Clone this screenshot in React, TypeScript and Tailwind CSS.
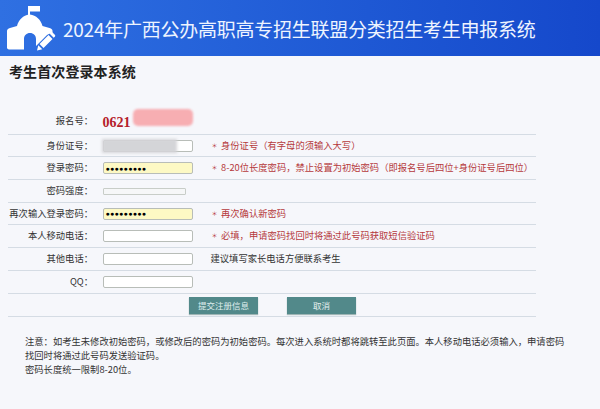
const font = "[font-family:'Noto_Sans_CJK_SC','Liberation_Sans',sans-serif]";

function Logo() {
  return (
    <svg width="56" height="56" viewBox="0 0 56 56" className="shrink-0">
      <path fill="#fff" d="M28 6h12v5.500H30V15h-2z" />
      <path
        fill="#fff"
        d="M29 14.500C23.500 15 18.500 20 17 26L10 28C8 28.500 7 29.500 7 31V47.500C7 48.800 8 49.500 9 49.500H24V39C24 35.500 26.500 33 30 33C33.500 33 36 35.500 36 39V46L46.500 35.500C48 34 50 33.500 52.500 34V31C52.500 29.500 51.500 28.500 49.500 28L42.500 26C41 20 36 15 30 14.500z"
      />
      <path fill="#fff" d="M39.500 44L48.500 35L52.500 39L43.500 48zM38.300 45.300L42.300 49.300L37 50.500zM49.700 33.800L50.800 32.700C51.400 32.100 52.200 32.100 52.800 32.700L54.800 34.700C55.400 35.300 55.400 36.100 54.800 36.700L53.700 37.800z" />
    </svg>
  );
}

function Row({ label, children, hint, star, h }: { label: string; children?: React.ReactNode; hint?: string; star?: boolean; h: string }) {
  return (
    <div className={`flex items-center ${h} border-b border-[#d5dce4]`}>
      <div className="w-[85px] shrink-0 text-right text-[9.300px] text-[#333] whitespace-nowrap">{label}</div>
      <div className="w-[107.500px] shrink-0 pl-[9.500px] flex items-center">{children}</div>
      {hint && (
        <div className={`pl-[10px] shrink-0 flex items-center text-[9.300px] whitespace-nowrap ${star ? "text-[#b5393c]" : "text-[#333]"}`}>
          {star && <span className="w-[10.500px] pl-[1px] text-[6px] leading-none">＊</span>}
          <span>{hint}</span>
        </div>
      )}
    </div>
  );
}

function Field({ yellow, value }: { yellow?: boolean; value?: string }) {
  return (
    <div className={`w-[90px] h-[12px] rounded-[2px] border border-[#b8bdb8] flex items-center pl-[2px] ${yellow ? "bg-[#fdf9c4]" : "bg-white"}`}>
      {value && <span className="text-[7px] leading-none tracking-[0.300px] text-black font-bold font-['Liberation_Sans',sans-serif]">{value}</span>}
    </div>
  );
}

export default function App() {
  return (
    <div className={`w-[600px] h-[409px] overflow-hidden bg-[#f6f7fb] ${font}`}>
      <header className="h-[56px] flex items-center gap-[7px] bg-gradient-to-r from-[#2f70e2] to-[#1548cb] text-[#eef4ff]">
        <Logo />
        <h1 className="text-[19px] leading-none whitespace-nowrap tracking-[-0.250px]">2024年广西公办高职高专招生联盟分类招生考生申报系统</h1>
      </header>
      <div className="pl-[8px] w-[536px]">
        <h2 className="pt-[7px] pl-[1px] text-[14px] leading-[17px] font-bold text-[#222] tracking-[0.100px]">考生首次登录本系统</h2>
        <div className="mt-[27px]">
          <Row label="报名号：" h="h-[28px]">
            <div className="relative">
              <span className="font-['Liberation_Serif',serif] font-bold text-[14px] text-[#b5202a]">0621</span>
              <div className="absolute left-[30px] top-[1px] w-[60px] h-[17px] rounded-[5px] bg-[#f7aeb2] blur-[1px]" />
            </div>
          </Row>
          <Row label="身份证号：" star hint="身份证号（有字母的须输入大写）" h="h-[22px]">
            <div className="relative">
              <Field />
              <div className="absolute left-[-1px] top-[-1px] w-[75px] h-[14px] bg-[#d4d5d8] blur-[1.500px]" />
            </div>
          </Row>
          <Row label="登录密码：" star hint="8-20位长度密码，禁止设置为初始密码（即报名号后四位+身份证号后四位）" h="h-[23px]">
            <Field yellow value="●●●●●●●●●" />
          </Row>
          <Row label="密码强度：" h="h-[23px]">
            <div className="w-[83px] h-[7px] rounded-[1px] border border-[#c8cdc8] bg-[#f6f7f8]" />
          </Row>
          <Row label="再次输入登录密码：" star hint="再次确认新密码" h="h-[22px]">
            <Field yellow value="●●●●●●●●●" />
          </Row>
          <Row label="本人移动电话：" star hint="必填，申请密码找回时将通过此号码获取短信验证码" h="h-[23px]">
            <Field />
          </Row>
          <Row label="其他电话：" hint="建议填写家长电话方便联系考生" h="h-[23px]">
            <Field />
          </Row>
          <Row label="QQ：" h="h-[23px]">
            <Field />
          </Row>
          <div className="h-[23px] flex items-start gap-[29px] pl-[181px] pt-[3px] border-b border-[#d5dce4]">
            <button className="w-[69px] h-[17px] bg-[#52898a] text-[#dfeeee] text-[8.500px] leading-[17px] shadow-[0_1px_1px_#9fb5b5]">提交注册信息</button>
            <button className="w-[69px] h-[17px] bg-[#52898a] text-[#e4f0f0] text-[8.500px] leading-[17px] shadow-[0_1px_1px_#9fb5b5]">取消</button>
          </div>
        </div>
        <div className="pl-[17px] pt-[17px] w-[560px] text-[9.300px] leading-[14px] text-[#333]">
          <p>注意：如考生未修改初始密码，或修改后的密码为初始密码。每次进入系统时都将跳转至此页面。本人移动电话必须输入，申请密码</p>
          <p>找回时将通过此号码发送验证码。</p>
          <p>密码长度统一限制8-20位。</p>
        </div>
      </div>
    </div>
  );
}
